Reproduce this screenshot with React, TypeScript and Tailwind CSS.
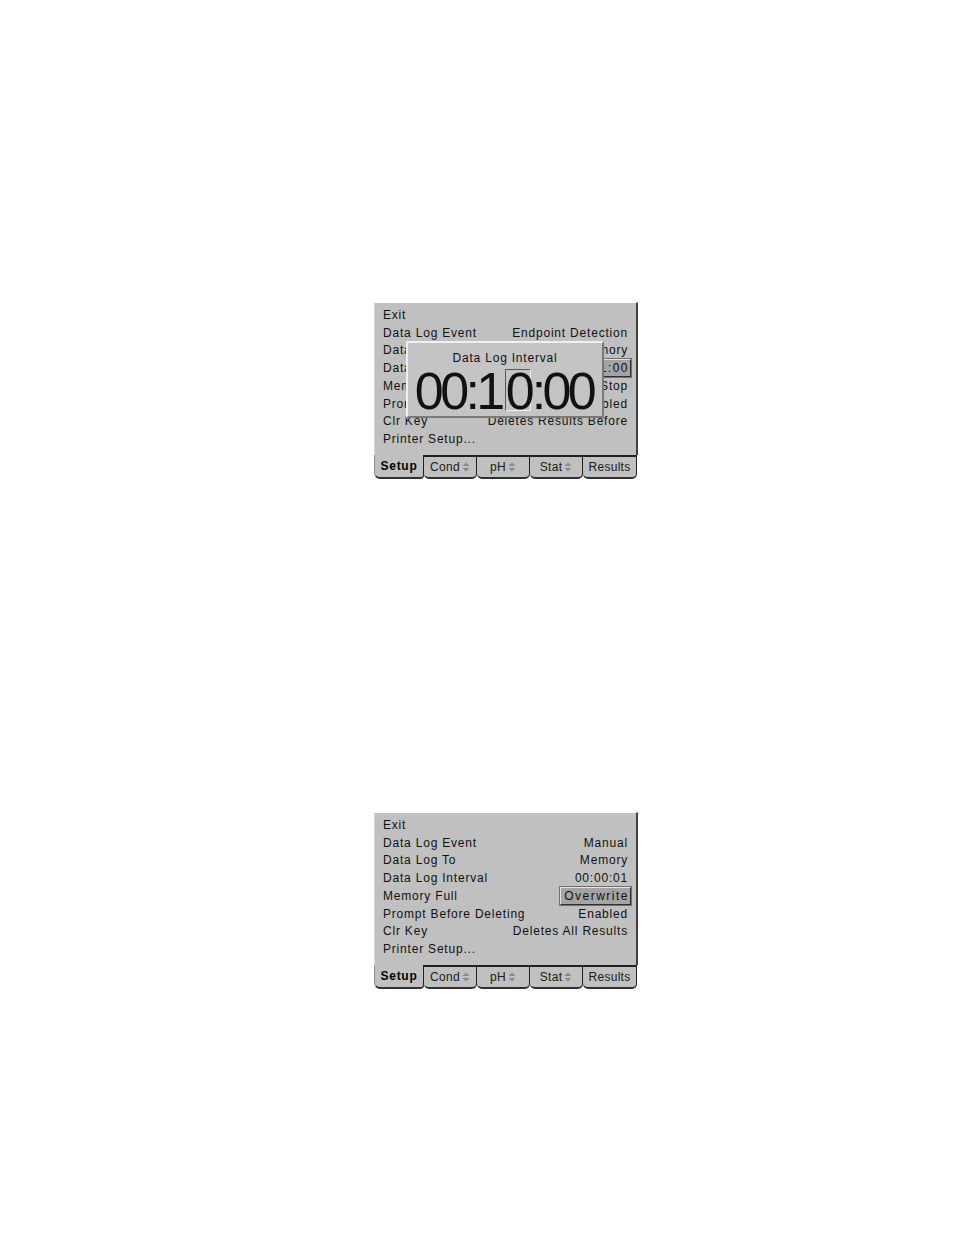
import React from 'react';

type Row = {
    label: string;
    value: string;
    boxed?: boolean;
};

const screenOneRows: Row[] = [
    { label: "Exit", value: "" },
    { label: "Data Log Event", value: "Endpoint Detection" },
    { label: "Data Log To", value: "Memory" },
    { label: "Data Log Interval", value: "00:01:00", boxed: true },
    { label: "Memory Full", value: "Stop" },
    { label: "Prompt Before Deleting", value: "Enabled" },
    { label: "Clr Key", value: "Deletes Results Before" },
    { label: "Printer Setup...", value: "" },
];

const screenTwoRows: Row[] = [
    { label: "Exit", value: "" },
    { label: "Data Log Event", value: "Manual" },
    { label: "Data Log To", value: "Memory" },
    { label: "Data Log Interval", value: "00:00:01" },
    { label: "Memory Full", value: "Overwrite", boxed: true },
    { label: "Prompt Before Deleting", value: "Enabled" },
    { label: "Clr Key", value: "Deletes All Results" },
    { label: "Printer Setup...", value: "" },
];

const tabs = [
    { label: "Setup", width: "w-[50px]", active: true, arrows: false },
    { label: "Cond", width: "w-[53px]", active: false, arrows: true },
    { label: "pH", width: "w-[53px]", active: false, arrows: true },
    { label: "Stat", width: "w-[53px]", active: false, arrows: true },
    { label: "Results", width: "w-[54px]", active: false, arrows: false },
];

function UpDown() {
    return (
        <svg width="8" height="10" viewBox="0 0 8 10" className="ml-[2px]">
            <path d="M4 0.5 L7.5 4 H0.5 Z" fill="#8a8a8a" />
            <path d="M4 9.5 L7.5 6 H0.5 Z" fill="#8a8a8a" />
        </svg>
    );
}

function TabBar() {
    return (
        <div className="flex h-[24px]">
            {tabs.map((tab) => (
                <div
                    key={tab.label}
                    className={
                        tab.active
                            ? `${tab.width} flex items-center justify-center bg-[#c0c0c0] border-b-2 border-r border-l border-b-[#303030] border-r-[#202020] border-l-[#909090] rounded-bl-[6px] rounded-br-[4px] font-bold text-[12px] tracking-[0.7px] text-black`
                            : `${tab.width} flex items-center justify-center bg-[#c0c0c0] border-t-2 border-b-2 border-r border-t-[#202020] border-b-[#303030] border-r-[#202020] rounded-b-[5px] text-[12px] tracking-[0.3px] text-[#1a1a1a]`
                    }
                >
                    <span>{tab.label}</span>
                    {tab.arrows && <UpDown />}
                </div>
            ))}
        </div>
    );
}

function Screen({ rows, popup }: { rows: Row[]; popup?: boolean }) {
    return (
        <div className="relative w-[264px] font-['Liberation_Sans',Arial,sans-serif]">
            <div className="h-[153px] bg-[#c0c0c0] border-t border-t-white border-r-2 border-r-[#404040] border-l border-l-[#d8d8d8] pt-[3px] pl-[8px] pr-[5px]">
                {rows.map((row) => (
                    <div key={row.label} className="flex h-[17.75px] items-center justify-between text-[12px] tracking-[0.8px] text-[#111]">
                        <span>{row.label}</span>
                        {row.boxed ? (
                            <span className="h-[18px] flex items-center pl-[3px] pr-[1px] bg-[#a4a4a4] border border-t-[#e4e4e4] border-l-[#e4e4e4] border-r-[#303030] border-b-[#303030] shadow-[0_0_0_1px_#707070] tracking-[1.5px]">
                                {row.value}
                            </span>
                        ) : (
                            <span className="pr-[3px]">{row.value}</span>
                        )}
                    </div>
                ))}
            </div>
            <TabBar />

            {popup && (
                <div className="absolute left-[32px] top-[39px] w-[198px] h-[77px] bg-[#c4c4c4] border-2 border-t-[#f0f0f0] border-l-[#f0f0f0] border-r-[#7a7a7a] border-b-[#7a7a7a]">
                    <div className="pt-[8px] h-[22px] leading-[14px] text-center text-[12px] tracking-[0.8px] text-[#111]">
                        Data Log Interval
                    </div>
                    <div className="mt-[4px] flex justify-center h-[42px] text-[52px] leading-[44px] text-[#111] tracking-[-3.6px] -ml-[2px]">
                        <span>00:1</span>
                        <span className="w-[26px] h-[42px] text-center tracking-normal border border-t-[#5a5a5a] border-l-[#5a5a5a] border-b-[#eeeeee] border-r-[#eeeeee] leading-[42px] ml-[3px] mr-[1px]">0</span>
                        <span>:00</span>
                    </div>
                </div>
            )}
        </div>
    );
}

export default function App() {
    return (
        <div className="min-h-[1235px] bg-white pl-[374px] pt-[302px]">
            <Screen rows={screenOneRows} popup />
            <div className="h-[333px]" />
            <Screen rows={screenTwoRows} />
        </div>
    );
}
